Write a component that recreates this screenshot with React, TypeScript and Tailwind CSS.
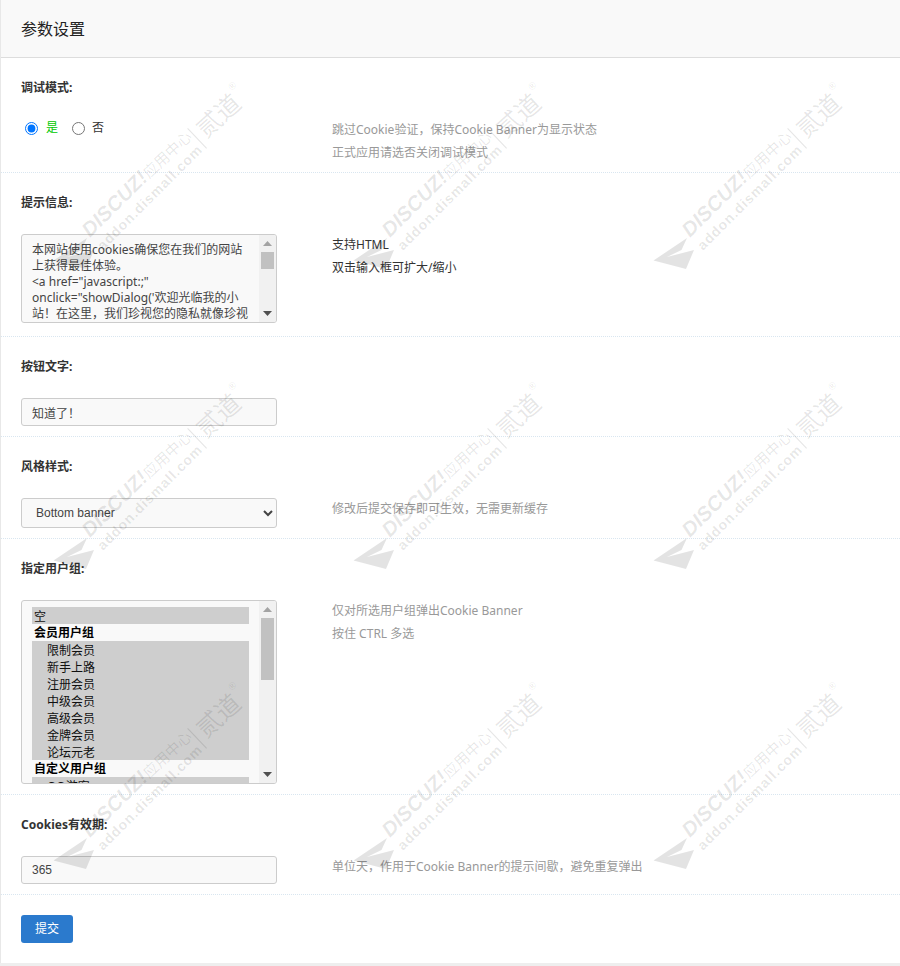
import React from "react";

const sans = "font-['Noto_Sans','Noto_Sans_CJK_SC',sans-serif]";

const message = `本网站使用cookies确保您在我们的网站上获得最佳体验。
<a href="javascript:;" onclick="showDialog('欢迎光临我的小站！在这里，我们珍视您的隐私就像珍视我们的友谊一样。为了给您提供更好的浏览体验，本站会使用cookies来记住您的偏好设置。');">了解更多</a>
`;

const groups: { label: string; items: string[] }[] = [
  { label: "会员用户组", items: ["限制会员", "新手上路", "注册会员", "中级会员", "高级会员", "金牌会员", "论坛元老"] },
  { label: "自定义用户组", items: ["QQ游客", "信息监察员", "审核员", "网站编辑", "实习版主", "版主", "超级版主", "管理员"] },
  { label: "系统用户组", items: ["禁止发言", "禁止访问", "禁止 IP", "游客", "等待验证会员"] },
];
const allValues = ["空", ...groups.flatMap((g) => g.items)];

function Watermark() {
  return (
    <svg width="300" height="300" viewBox="0 0 300 300" className="block shrink-0">
      <g fill="#000" fillOpacity="0.1">
        <path fillOpacity="0.11" d="M53.5 260.5 L87 238 L81.5 250 L67 257 L94 250 L86 269 Z" />
        <text x="0" y="0" transform="translate(90 238) rotate(-45)" fontFamily="'Liberation Sans',sans-serif" fontStyle="italic" fontWeight="700" fontSize="20.5">DISCUZ!</text>
        <text x="0" y="0" transform="translate(149 179) rotate(-43)" fontFamily="'Noto Sans CJK SC',sans-serif" fontSize="15">应用中心</text>
        <text x="0" y="0" transform="translate(103 251) rotate(-45)" fontFamily="'Liberation Sans',sans-serif" fontWeight="700" fontSize="14" letterSpacing="0.9">addon.dismall.com</text>
        <path d="M188 128 L207 148 L206.2 148.8 L187.2 128.8 Z" />
        <text x="0" y="0" transform="translate(206 139) rotate(-42)" fontFamily="'Noto Sans CJK SC',sans-serif" fontSize="25">贰道</text>
        <text x="0" y="0" transform="translate(232 91) rotate(-45)" fontFamily="'Liberation Sans',sans-serif" fontSize="10">®</text>
      </g>
    </svg>
  );
}

function Scrollbar({ thumb }: { thumb: string }) {
  return (
    <div className="pointer-events-none absolute bottom-[1px] right-[1px] top-[1px] flex w-[17px] flex-col items-center justify-between rounded-r-[2px] bg-[#f1f1f1]">
      <div className="flex h-[17px] items-center justify-center">
        <svg width="9" height="5" viewBox="0 0 9 5"><path d="M4.5 0 L9 5 L0 5 Z" fill="#a3a3a3" /></svg>
      </div>
      <div className={`absolute left-[2px] top-[17px] w-[13px] bg-[#c1c1c1] ${thumb}`} />
      <div className="flex h-[17px] items-center justify-center">
        <svg width="9" height="5" viewBox="0 0 9 5"><path d="M0 0 L9 0 L4.5 5 Z" fill="#505050" /></svg>
      </div>
    </div>
  );
}

function Help({ lines, dark }: { lines: string[]; dark?: boolean }) {
  return (
    <div className={`ml-[55px] text-xs leading-[22.5px] ${dark ? "text-[#333]" : "text-[#999]"}`}>
      {lines.map((l) => (
        <div key={l}>{l}</div>
      ))}
    </div>
  );
}

function Row({ label, children, help, dark, pb = "pb-[10px]" }: { label: string; children: React.ReactNode; help: string[]; dark?: boolean; pb?: string }) {
  return (
    <section className={`border-b border-dotted border-[#d9e6f0] pl-[20px] ${pb}`}>
      <h3 className="pt-[21px] pb-[22px] text-xs font-bold leading-[18px] text-[#333]">{label}</h3>
      <div className="flex items-start">
        <div className="relative w-[256px] shrink-0">{children}</div>
        <Help lines={help} dark={dark} />
      </div>
    </section>
  );
}

const field =
  "block w-[256px] rounded-[3px] border border-[#ccc] bg-[#f9f9f9] text-xs text-[#444] font-['Liberation_Sans','Noto_Sans_CJK_SC',sans-serif] outline-none";

export default function App() {
  return (
    <div className={`relative h-[966px] w-[900px] overflow-hidden bg-[#eeeeee] ${sans}`}>
      <div className="h-[963px] border-l border-[#e8e8e8] bg-white">
        <header className="flex h-[58px] items-center border-b border-[#ddd] bg-[#f9f9f9] pl-[20px] text-base text-[#222]">
          参数设置
        </header>

        <Row label="调试模式:" help={["跳过Cookie验证，保持Cookie Banner为显示状态", "正式应用请选否关闭调试模式"]} pb="pb-[8px]">
          <div className="flex h-[18px] items-center pl-[4px] text-xs text-[#333]">
            <input type="radio" name="debug" defaultChecked className="m-0 h-[13px] w-[13px]" />
            <span className="ml-[8px] text-[#00c800]">是</span>
            <input type="radio" name="debug" className="m-0 ml-[14px] h-[13px] w-[13px]" />
            <span className="ml-[7px]">否</span>
          </div>
        </Row>

        <Row label="提示信息:" help={["支持HTML", "双击输入框可扩大/缩小"]} dark pb="pb-[13px]">
          <textarea
            readOnly
            defaultValue={message}
            className={`${field} h-[89px] resize-none overflow-hidden py-[7px] pl-[10px] pr-[27px] leading-[16px] font-['Noto_Sans','Noto_Sans_CJK_SC',sans-serif]`}
          />
          <Scrollbar thumb="h-[17px]" />
        </Row>

        <Row label="按钮文字:" help={[]}>
          <input readOnly defaultValue="知道了！" className={`${field} h-[28px] px-[10px]`} />
        </Row>

        <Row label="风格样式:" help={["修改后提交保存即可生效，无需更新缓存"]}>
          <select defaultValue="bottom" className={`${field} h-[30px] pl-[10px]`}>
            <option value="bottom">Bottom banner</option>
            <option value="top">Top banner</option>
            <option value="float">Floating</option>
          </select>
        </Row>

        <Row label="指定用户组:" help={["仅对所选用户组弹出Cookie Banner", "按住 CTRL 多选"]}>
          <select
            multiple
            defaultValue={allValues}
            className={`${field} h-[184px] overflow-hidden py-[6px] pl-[10px] pr-[27px] text-black [&_option]:h-[17px] [&_option]:py-0 [&>option]:pl-[2px] [&_optgroup_option]:pl-[15px] [&_optgroup]:-mt-[1px]`}
          >
            <option value="空">空</option>
            {groups.map((g) => (
              <optgroup key={g.label} label={g.label}>
                {g.items.map((i) => (
                  <option key={i} value={i}>
                    {i}
                  </option>
                ))}
              </optgroup>
            ))}
          </select>
          <Scrollbar thumb="h-[62px]" />
        </Row>

        <Row label="Cookies有效期:" help={["单位天，作用于Cookie Banner的提示间歇，避免重复弹出"]}>
          <input readOnly defaultValue="365" className={`${field} h-[28px] px-[10px]`} />
        </Row>

        <div className="pl-[20px] pt-[20px]">
          <button type="button" className="h-[28px] w-[52px] rounded-[3px] bg-[#2b7acd] text-xs text-white">
            提交
          </button>
        </div>
      </div>

      <div className="pointer-events-none absolute inset-0 flex flex-wrap content-start">
        {Array.from({ length: 9 }).map((_, i) => (
          <Watermark key={i} />
        ))}
      </div>
    </div>
  );
}
